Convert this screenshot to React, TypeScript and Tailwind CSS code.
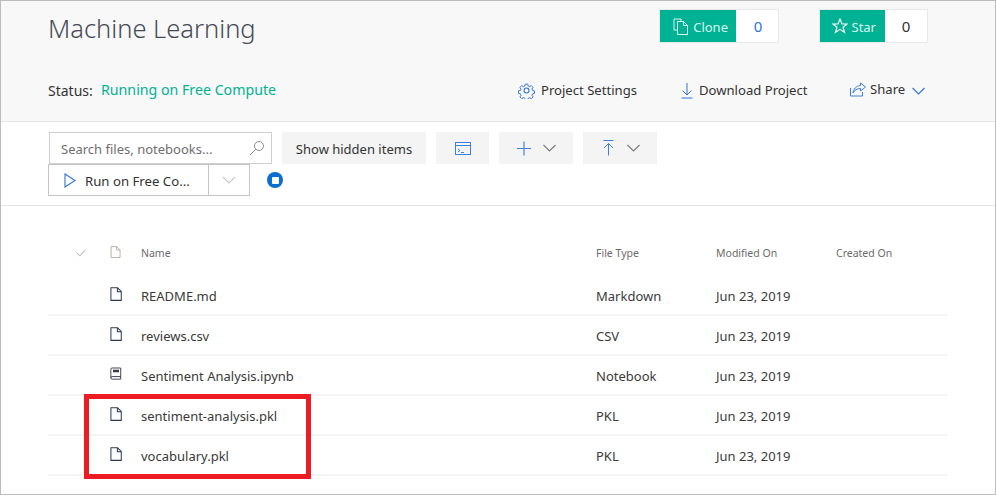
const FONT = "font-['Noto_Sans','Open_Sans',sans-serif]"

const files = [
  { name: "README.md", type: "Markdown", icon: "file" },
  { name: "reviews.csv", type: "CSV", icon: "file" },
  { name: "Sentiment Analysis.ipynb", type: "Notebook", icon: "book" },
  { name: "sentiment-analysis.pkl", type: "PKL", icon: "file" },
  { name: "vocabulary.pkl", type: "PKL", icon: "file" },
]

function FileIcon({ color = "#2b3a55", w = 12, h = 14 }: { color?: string; w?: number; h?: number }) {
  return (
    <svg width={w} height={h} viewBox="0 0 13 15" fill="none" stroke={color} strokeWidth="1.1">
      <path d="M1 .8h7.200l4 4v9.600h-11.200z" />
      <path d="M8 .8v4.200h4.200" />
    </svg>
  )
}

function BookIcon() {
  return (
    <svg width="12" height="14" viewBox="0 0 14 16" fill="none" stroke="#3a3a4a" strokeWidth="1.1">
      <path d="M2.500 1h10v13h-10a1.500 1.500 0 0 1-1.500-1.500v-10a1.500 1.500 0 0 1 1.500-1.500z" />
      <path d="M1 12.500a1.500 1.500 0 0 1 1.500-1.500h10" />
      <rect x="3.500" y="3" width="7" height="3" fill="#3a3a4a" stroke="none" />
    </svg>
  )
}

function Chevron({ color = "#7a7a7a", w = 13 }: { color?: string; w?: number }) {
  return (
    <svg width={w} height="8" viewBox="0 0 13 8" fill="none" stroke={color} strokeWidth="1.1">
      <path d="M.5 1l6 6 6-6" />
    </svg>
  )
}

function CountButton({ label, count, icon, countClass, greenClass, boxClass }: { label: string; count: string; icon: React.ReactNode; countClass: string; greenClass: string; boxClass: string }) {
  return (
    <div className={`flex h-[34px] border border-[#e8e8e8] bg-white ${boxClass}`}>
      <div className={`flex items-center justify-end gap-[4px] bg-[#00b294] text-[13px] text-[#d9f5f0] ${greenClass}`}>
        {icon}
        <span className="pt-[3px]">{label}</span>
      </div>
      <div className={`flex flex-1 items-center justify-center text-[15px] ${countClass}`}>{count}</div>
    </div>
  )
}

export default function App() {
  return (
    <div className={`relative box-border h-[495px] w-[996px] overflow-hidden border border-[#bcbcbc] bg-white text-[13px] text-[#333333] ${FONT}`}>
      <header className="box-content h-[120px] border-b border-[#e6e6e6] bg-[#f8f8f8] pl-[47px] pr-[67px]">
        <div className="flex items-start justify-between pt-[8px]">
          <h1 className="text-[25.500px] font-light leading-[38px] text-[#444a55]">Machine Learning</h1>
          <div className="flex gap-[40px]">
            <CountButton
              label="Clone"
              count="0"
              boxClass="w-[120px]"
              greenClass="w-[76px] pr-[8px]"
              countClass="pl-[2px] text-[#2f73d8]"
              icon={
                <svg width="16" height="17" viewBox="0 0 16 17" fill="none" stroke="#d9f5f0" strokeWidth="1">
                  <path d="M1 1h7v2M1 1v11h3" />
                  <path d="M4.500 3.500h6l4 4v9h-10z" />
                  <path d="M10.500 3.500v4h4" />
                </svg>
              }
            />
            <CountButton
              label="Star"
              count="0"
              boxClass="w-[109px]"
              greenClass="w-[65px] pr-[9px]"
              countClass="text-[#333333]"
              icon={
                <svg width="16" height="16" viewBox="0 0 16 16" fill="none" stroke="#ffffff" strokeWidth="1.1">
                  <path d="M8 1l2 5h5.200l-4.200 3.200 1.600 5.300-4.600-3.200-4.600 3.200 1.600-5.300-4.200-3.200h5.200z" />
                </svg>
              }
            />
          </div>
        </div>
        <div className="mt-[32px] flex h-[24px] items-center text-[14px]">
          <span className="w-[53px] pb-[2px]">Status:</span>
          <span className="w-[417px] pb-[2px] text-[14.200px] text-[#00b294]">Running on Free Compute</span>
          <span className="flex w-[163px] items-center gap-[6px]">
            <svg width="17" height="17" viewBox="0 0 24 24" fill="none" stroke="#2f73d8" strokeWidth="1.500">
              <circle cx="12" cy="12" r="3.500" />
              <path d="M10 2h4l.6 3 2.300 1 2.600-1.700 2.800 2.800-1.700 2.600 1 2.300 3 .6v4l-3 .6-1 2.300 1.700 2.600-2.800 2.800-2.600-1.700-2.300 1-.6 3h-4l-.6-3-2.300-1-2.600 1.700-2.800-2.800 1.700-2.600-1-2.300-3-.6v-4l3-.6 1-2.300-1.700-2.600 2.800-2.800 2.600 1.700 2.300-1z" transform="translate(1.200 1.200) scale(.9)" />
            </svg>
            <span className="text-[13.100px]">Project Settings</span>
          </span>
          <span className="flex w-[169px] items-center gap-[6px]">
            <svg width="12" height="16" viewBox="0 0 12 16" fill="none" stroke="#2f73d8" strokeWidth="1">
              <path d="M6 0v12M1.500 7.500l4.500 4.500 4.500-4.500M.5 15h11" />
            </svg>
            <span className="text-[13.100px]">Download Project</span>
          </span>
          <span className="-mt-[3px] flex items-center gap-[4px]">
            <svg width="16" height="15" viewBox="0 0 16 15" fill="none" stroke="#3f7fdc" strokeWidth="1">
              <path d="M.5 6v8h12v-4M10.500 1l5 4-5 4V6.500C7 6.500 4.500 8 3 11c.5-4 3-7 7.500-7.500z" />
            </svg>
            <span className="text-[13.100px]">Share</span>
            <span className="ml-[3px] mt-[3px]"><Chevron color="#2f73d8" /></span>
          </span>
        </div>
      </header>

      <section className="box-content h-[73px] border-b border-[#e6e6e6] pl-[47px] pt-[10px]">
        <div className="flex h-[32px] text-[13px]">
          <div className="ml-[1px] flex w-[223px] items-center justify-between border border-[#cfcfcf] pl-[11px] pr-[6px] text-[#6f6f6f]">
            <span className="pt-[3px]">Search files, notebooks...</span>
            <svg width="16" height="16" viewBox="0 0 16 16" fill="none" stroke="#8c8c8c" strokeWidth="1">
              <circle cx="10" cy="6" r="4.500" />
              <path d="M6.800 9.200l-5.800 5.800" />
            </svg>
          </div>
          <div className="ml-[10px] flex w-[144px] items-center justify-center bg-[#f4f4f4] pt-[3px]">Show hidden items</div>
          <div className="ml-[10px] flex w-[53px] items-center justify-center bg-[#f4f4f4]">
            <svg width="16" height="13" viewBox="0 0 16 13" fill="none" stroke="#3f7fdc" strokeWidth="1">
              <rect x=".5" y=".5" width="15" height="12" />
              <path d="M.5 3.500h15M3 7l2 1.500-2 1.500M6 10.500h3" />
            </svg>
          </div>
          <div className="ml-[10px] flex w-[74px] items-center gap-[11px] bg-[#f4f4f4] pl-[17px]">
            <svg width="16" height="17" viewBox="0 0 17 17" fill="none" stroke="#3f7fdc" strokeWidth="1.200">
              <path d="M8.500 1v15M1 8.500h15" />
            </svg>
            <Chevron />
          </div>
          <div className="ml-[10px] flex w-[74px] items-center gap-[13px] bg-[#f4f4f4] pl-[20px]">
            <svg width="11" height="16" viewBox="0 0 11 16" fill="none" stroke="#3f7fdc" strokeWidth="1">
              <path d="M.5 .5h10M5.500 3.500v12M1 8l4.500-4.500L10 8" />
            </svg>
            <Chevron />
          </div>
        </div>
        <div className="flex h-[32px] items-center">
          <div className="flex h-[32px] w-[202px] border border-[#c4c4c4]">
            <div className="flex w-[160px] items-center gap-[9px] border-r border-[#c4c4c4] pl-[15px]">
              <svg width="12" height="15" viewBox="0 0 12 15" fill="none" stroke="#2f73d8" strokeWidth="1.100">
                <path d="M1 1l10 6.500-10 6.500z" />
              </svg>
              <span className="pt-[3px] text-[13.200px]">Run on Free Co...</span>
            </div>
            <div className="flex flex-1 items-center justify-center">
              <Chevron color="#c8c8c8" w={16} />
            </div>
          </div>
          <span className="ml-[17px] flex h-[16px] w-[16px] items-center justify-center rounded-full bg-[#0a6ed1]">
            <span className="h-[7px] w-[7px] rounded-[1px] bg-white" />
          </span>
        </div>
      </section>

      <div className="mx-[47px] pt-[27px]">
        <div className="grid h-[40px] grid-cols-[62px_31px_455px_120px_120px_1fr] items-center text-[10.500px] text-[#6b6b6b]">
          <span className="pl-[28px]">
            <svg width="10" height="8" viewBox="0 0 12 9" fill="none" stroke="#9a9a9a" strokeWidth="1.100">
              <path d="M1 4.500l3.500 3.500L11 1" />
            </svg>
          </span>
          <span className="-mt-[3px]"><FileIcon color="#b0a89c" w={11} h={12} /></span>
          <span className="pt-[2px]">Name</span>
          <span className="pt-[2px]">File Type</span>
          <span className="pt-[2px]">Modified On</span>
          <span className="pt-[2px]">Created On</span>
        </div>
        <div className="mt-[3px]">
          {files.map((file) => (
            <div key={file.name} className="grid h-[40px] grid-cols-[62px_31px_455px_120px_120px_1fr] items-center border-b-2 border-[#f4f4f4] text-[13px] text-[#3a3a3a]">
              <span />
              <span className="-mt-[2px]">{file.icon === "book" ? <BookIcon /> : <FileIcon />}</span>
              <span className="pt-[4px]">{file.name}</span>
              <span className="pt-[4px]">{file.type}</span>
              <span className="pt-[4px]">Jun 23, 2019</span>
              <span />
            </div>
          ))}
        </div>
      </div>

      <div className="absolute left-[83px] top-[393px] h-[85px] w-[227px] border-[5px] border-[#ed1c24]" />
    </div>
  )
}
